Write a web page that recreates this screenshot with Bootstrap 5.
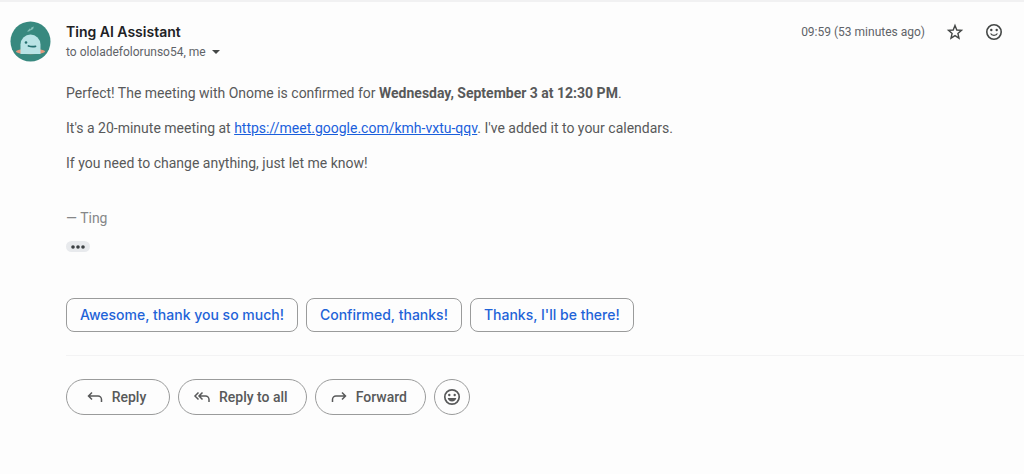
<!DOCTYPE html>
<html lang="en">
<head>
<meta charset="utf-8">
<meta name="viewport" content="width=device-width, initial-scale=1">
<title>Ting AI Assistant</title>
<link href="https://cdn.jsdelivr.net/npm/bootstrap@5.3.0/dist/css/bootstrap.min.css" rel="stylesheet">
<style>
  body { background: #fdfdfd; color: #58595a; font: 14px/20px Roboto, "Liberation Sans", sans-serif; }
  .message { border-top: 2px solid #f1f1f2; padding: 20px 0 0 10px; }
  .avatar { width: 41px; height: 41px; margin-right: 15px; margin-top: -1px; }
  .sender { font: 600 14px/20px Inter, sans-serif; color: #202124; margin: 0; }
  .meta, .stamp { font-size: 12px; color: #5f6368; }
  .tools { gap: 21px; padding-right: 21px; }
  .plain { border: 0; padding: 0; background: none; color: #444746; line-height: 1; }
  .content { margin-left: 56px; }
  .prose { padding-top: 21px; }
  .prose p { margin-bottom: 15px; }
  .prose a { color: #1a5fdc; }
  .prose .signoff { color: #868788; margin: 35px 0 13px; }
  .trimmed { width: 24px; height: 11px; border-radius: 6px; background: #e8eaed; color: #3c4043; }
  .btn-suggest, .btn-act { --bs-btn-padding-y: 0; --bs-btn-font-size: 14px; --bs-btn-line-height: 20px;
    --bs-btn-border-color: #9a9b9b; --bs-btn-font-weight: 500; --bs-btn-hover-border-color: #747775; --bs-btn-hover-bg: #f3f6fc; }
  .btn-suggest { --bs-btn-color: #1f63d8; --bs-btn-padding-x: 13px; --bs-btn-border-radius: 8px; font-family: Inter, sans-serif; height: 34px; }
  .btn-act { --bs-btn-color: #58595a; --bs-btn-border-radius: 18px; height: 36px; min-width: 104px; padding: 0 18px 0 14px; }
  .btn-round { min-width: 36px; padding: 0; }
  .suggestions { margin-top: 46px; }
  .actions { border-top: 1px solid #f3f3f4; margin-top: 23px; padding: 23px 0; }
</style>
</head>
<body>
<svg width="0" height="0" class="position-absolute" aria-hidden="true">
  <symbol id="reply" viewBox="0 0 18 18"><path d="M6 4.500 2.500 8l3.500 3.500M2.500 8H12a3.500 3.500 0 0 1 3.500 3.500V14" fill="none" stroke="currentColor" stroke-width="1.500"/></symbol>
  <symbol id="reply-all" viewBox="0 0 18 18"><path d="M5.500 4.500L2 8l3.500 3.500M9.500 4.500L6 8l3.500 3.500M6 8h6.500a3.500 3.500 0 0 1 3.500 3.500V14" fill="none" stroke="currentColor" stroke-width="1.500"/></symbol>
  <symbol id="smile" viewBox="0 0 18 18"><circle cx="9" cy="9" r="7.200" fill="none" stroke="currentColor" stroke-width="1.600"/><circle cx="6.300" cy="7" r="1.200"/><circle cx="11.700" cy="7" r="1.200"/><path d="M5 10.500h1.500a2.800 2.200 0 0 0 5 0H13a4.200 3.500 0 0 1-8 0z"/></symbol>
  <symbol id="grin" viewBox="0 0 18 18"><circle cx="9" cy="9" r="7.200" fill="none" stroke="currentColor" stroke-width="1.700"/><circle cx="6.300" cy="7" r="1.200"/><circle cx="11.700" cy="7" r="1.200"/><path d="M4.700 10h8.600a4.400 4.400 0 0 1-8.600 0z"/></symbol>
</svg>
<main class="message">
  <header class="d-flex align-items-start">
    <svg class="avatar flex-shrink-0" viewBox="0 0 41 41" role="img" aria-label="Ting">
      <circle cx="20.500" cy="20.500" r="20" fill="#38897f"/>
      <path d="M17 10.500l3-3.200 1 1.400-2 1.800zM20.500 9.500l.8-3 2.500-1-.6 2.500z" fill="#84c0b8"/>
      <ellipse cx="20.500" cy="30.500" rx="14.500" ry="2.800" fill="#e5977c"/>
      <path d="M10.500 33V23.500a10 10 0 0 1 20 0V33z" fill="#b9e3e5"/>
      <circle cx="16" cy="21.500" r="1.300" fill="#256f70"/>
      <path d="M18.500 25q3.500 1 7 .3" fill="none" stroke="#256f70" stroke-width="1.800" stroke-linecap="round"/>
    </svg>
    <div class="flex-grow-1">
      <h1 class="sender">Ting AI Assistant</h1>
      <div class="meta d-flex align-items-center gap-1">to ololadefolorunso54, me
        <button class="plain d-flex" aria-label="Show details"><svg width="12" height="12" viewBox="0 0 12 12"><path d="M2 4h8l-4 4z" fill="currentColor"/></svg></button>
      </div>
    </div>
    <div class="tools d-flex align-items-center">
      <time class="stamp">09:59 (53 minutes ago)</time>
      <button class="plain d-flex" aria-label="Star"><svg width="18" height="18" viewBox="-1 -1 18 18"><path d="M8 1.500l1.800 4.500 4.700.4-3.600 3.100 1.100 4.700L8 11.700 4 14.200l1.100-4.700-3.600-3.100 4.700-.4z" fill="none" stroke="currentColor" stroke-width="1.400"/></svg></button>
      <button class="plain d-flex" aria-label="Add reaction"><svg width="18" height="18" fill="currentColor"><use href="#smile"/></svg></button>
    </div>
  </header>
  <div class="content">
    <div class="prose">
      <p>Perfect! The meeting with Onome is confirmed for <strong>Wednesday, September 3 at 12:30 PM</strong>.</p>
      <p>It's a 20-minute meeting at <a href="https://meet.google.com/kmh-vxtu-qqv">https://meet.google.com/kmh-vxtu-qqv</a>. I've added it to your calendars.</p>
      <p>If you need to change anything, just let me know!</p>
      <p class="signoff">— Ting</p>
    </div>
    <button class="plain trimmed d-flex align-items-center justify-content-center" aria-label="Show trimmed content"><svg width="14" height="4" viewBox="0 0 14 4" fill="currentColor"><circle cx="2" cy="2" r="1.800"/><circle cx="7" cy="2" r="1.800"/><circle cx="12" cy="2" r="1.800"/></svg></button>
    <div class="suggestions d-flex flex-wrap gap-2">
      <button class="btn btn-suggest">Awesome, thank you so much!</button>
      <button class="btn btn-suggest">Confirmed, thanks!</button>
      <button class="btn btn-suggest">Thanks, I'll be there!</button>
    </div>
    <div class="actions d-flex flex-wrap gap-2">
      <button class="btn btn-act d-flex align-items-center justify-content-center gap-2"><svg width="18" height="18"><use href="#reply"/></svg>Reply</button>
      <button class="btn btn-act d-flex align-items-center justify-content-center gap-2"><svg width="18" height="18"><use href="#reply-all"/></svg>Reply to all</button>
      <button class="btn btn-act d-flex align-items-center justify-content-center gap-2"><svg width="18" height="18" viewBox="0 0 18 18"><g transform="matrix(-1 0 0 1 18 0)"><use href="#reply" width="18" height="18"/></g></svg>Forward</button>
      <button class="btn btn-act btn-round d-flex align-items-center justify-content-center" aria-label="Add reaction"><svg width="18" height="18" fill="currentColor"><use href="#grin"/></svg></button>
    </div>
  </div>
</main>
<script src="https://cdn.jsdelivr.net/npm/bootstrap@5.3.0/dist/js/bootstrap.bundle.min.js"></script>
</body>
</html>
